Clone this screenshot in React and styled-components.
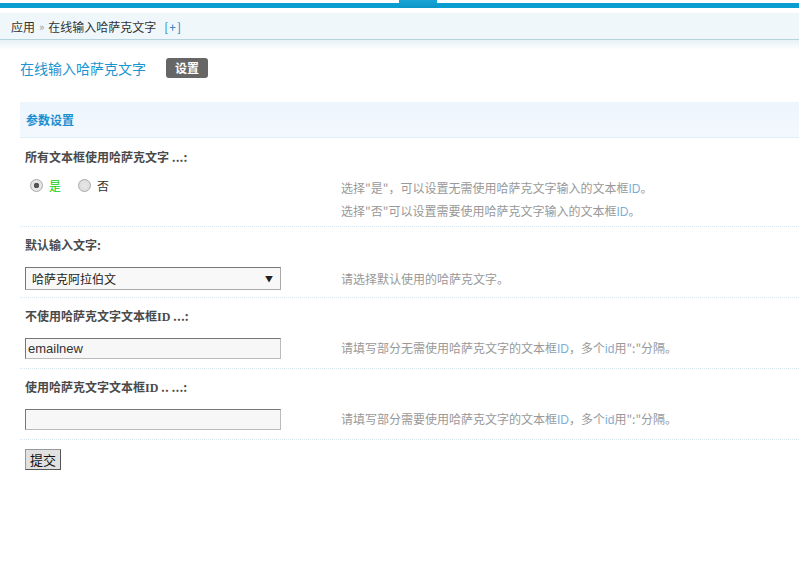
import React from 'react';
import styled, { createGlobalStyle } from 'styled-components';

const GlobalStyle = createGlobalStyle`
  body {
    margin: 0;
    background: #fff;
    font-family: "Noto Sans CJK SC", "Liberation Sans", sans-serif;
    font-size: 12px;
    color: #333;
  }
`;

const TopBar = styled.div`
  position: relative;
  height: 8px;
  background: linear-gradient(#fff 0, #fff 3px, #0a9ed0 3px, #0a9ed0 8px);
`;

const ActiveTab = styled.div`
  position: absolute;
  left: 399px;
  top: 0;
  width: 38px;
  height: 8px;
  background: linear-gradient(#1aa5d6, #0a95c8);
`;

const Crumbs = styled.div`
  margin-top: 5px;
  height: 26px;
  padding-left: 11px;
  display: flex;
  align-items: center;
  gap: 4px;
  background: #f0f7fb;
  border-bottom: 1px solid #b5d3dd;
  font-size: 12px;
  color: #333;
`;

const CrumbShade = styled.div`
  height: 10px;
  background: linear-gradient(#e6f1f7, #fff);
`;

const Sep = styled.span`
  color: #999;
  font-size: 11px;
`;

const Plus = styled.span`
  color: #2a7ac0;
  margin-left: 4px;
  letter-spacing: 1px;
`;

const TitleRow = styled.div`
  display: flex;
  align-items: center;
  gap: 20px;
  padding: 0 0 0 20px;
  height: 20px;
  margin-top: 8px;
`;

const Title = styled.h1`
  margin: 0;
  font-size: 14px;
  font-weight: normal;
  color: #1a95d1;
`;

const Badge = styled.span`
  background: #666;
  color: #fff;
  font-weight: bold;
  font-size: 12px;
  border-radius: 3px;
  padding: 1px 9px;
  line-height: 18px;
`;

const Panel = styled.div`
  margin: 24px 0 0 20px;
`;

const PanelHead = styled.div`
  height: 35px;
  padding-left: 6px;
  display: flex;
  align-items: center;
  background: linear-gradient(#edf5fd, #f3f8fd);
  border-bottom: 1px dotted #d6e6ee;
  color: #1a8fd0;
  font-weight: bold;
  font-size: 12px;
`;

const Group = styled.div`
  border-bottom: 1px dotted #d6e6ee;
`;

const Label = styled.div`
  padding: ${p => p.$first ? '11px' : '10px'} 5px 0;
  height: ${p => p.$first ? '28px' : '30px'};
  line-height: 16px;
  font-weight: bold;
  color: #4a4a4a;
`;

const Field = styled.div`
  display: grid;
  grid-template-columns: 316px 1fr;
  align-items: ${p => p.$top ? 'start' : 'center'};
  padding: 0 0 ${p => p.$pad}px 5px;
`;

const Desc = styled.div`
  color: #999;
  line-height: ${p => p.$lh || 20}px;
`;

const Radios = styled.div`
  display: flex;
  align-items: center;
  padding: 0 0 0 5px;
  height: 16px;
`;

const RadioDot = styled.span`
  width: 11px;
  height: 11px;
  border-radius: 50%;
  border: 1px solid #aaa;
  background: radial-gradient(circle, ${p => p.$on ? '#555 0 2.5px, #e6e6e6 3px' : '#e8e8e8 0, #d8d8d8 100%'});
  margin-right: 6px;
`;

const RadioText = styled.span`
  color: ${p => p.$color};
  margin-right: ${p => p.$gap}px;
`;

const SelectBox = styled.div`
  height: 21px;
  border: 1px solid #aaa;
  border-top-color: #777;
  border-left-color: #777;
  background: #f8f8f8;
  display: flex;
  align-items: center;
  justify-content: space-between;
  padding: 0 7px 0 6px;
  box-sizing: content-box;
  width: 241px;
  font-size: 12px;
  color: #222;
`;

const Arrow = styled.span`
  font-size: 8px;
  color: #222;
`;

const TextInput = styled.input`
  height: 19px;
  box-sizing: content-box;
  padding: 0 0 0 2px;
  margin: 0;
  border: 1px solid #bbb;
  border-top-color: #777;
  border-left-color: #777;
  background: #f7f7f7;
  font-family: "Liberation Sans", Arial, sans-serif;
  font-size: 13px;
  color: #333;
  width: 252px;
`;

const Submit = styled.button`
  margin: 9px 0 0 25px;
  height: 21px;
  padding: 0 4px;
  border: 1px solid #555;
  border-top-color: #999;
  border-left-color: #999;
  background: #e1e1e1;
  font-family: "Noto Sans CJK SC", sans-serif;
  font-size: 13px;
  line-height: 17px;
  color: #111;
`;

const Id = styled.span`
  color: #7ab0d8;
  font-family: "Liberation Sans", sans-serif;
`;

const LabelId = styled.span`
  font-family: "Liberation Serif", serif;
`;

export default function App() {
  return (
    <>
      <GlobalStyle />
      <TopBar><ActiveTab /></TopBar>
      <Crumbs>
        <span>应用</span>
        <Sep>»</Sep>
        <span>在线输入哈萨克文字</span>
        <Plus>[+]</Plus>
      </Crumbs>
      <CrumbShade />
      <TitleRow>
        <Title>在线输入哈萨克文字</Title>
        <Badge>设置</Badge>
      </TitleRow>
      <Panel>
        <PanelHead>参数设置</PanelHead>
        <Group>
          <Label $first>所有文本框使用哈萨克文字 ...:</Label>
          <Field $top $pad={3}>
            <Radios>
              <RadioDot $on />
              <RadioText $color="#11cc11" $gap={17}>是</RadioText>
              <RadioDot />
              <RadioText $color="#333" $gap={0}>否</RadioText>
            </Radios>
            <Desc $lh={22}>
              选择"是"，可以设置无需使用哈萨克文字输入的文本框<Id>ID</Id>。<br />
              选择"否"可以设置需要使用哈萨克文字输入的文本框<Id>ID</Id>。
            </Desc>
          </Field>
        </Group>
        <Group>
          <Label>默认输入文字:</Label>
          <Field $pad={7}>
            <SelectBox>
              <span>哈萨克阿拉伯文</span>
              <Arrow>▼</Arrow>
            </SelectBox>
            <Desc>请选择默认使用的哈萨克文字。</Desc>
          </Field>
        </Group>
        <Group>
          <Label>不使用哈萨克文字文本框<LabelId>ID</LabelId> ...:</Label>
          <Field $pad={9}>
            <TextInput defaultValue="emailnew" />
            <Desc>请填写部分无需使用哈萨克文字的文本框<Id>ID</Id>，多个<Id>id</Id>用":"分隔。</Desc>
          </Field>
        </Group>
        <Group>
          <Label>使用哈萨克文字文本框<LabelId>ID</LabelId> .. ...:</Label>
          <Field $pad={9}>
            <TextInput />
            <Desc>请填写部分需要使用哈萨克文字的文本框<Id>ID</Id>，多个<Id>id</Id>用":"分隔。</Desc>
          </Field>
        </Group>
      </Panel>
      <Submit>提交</Submit>
    </>
  );
}
